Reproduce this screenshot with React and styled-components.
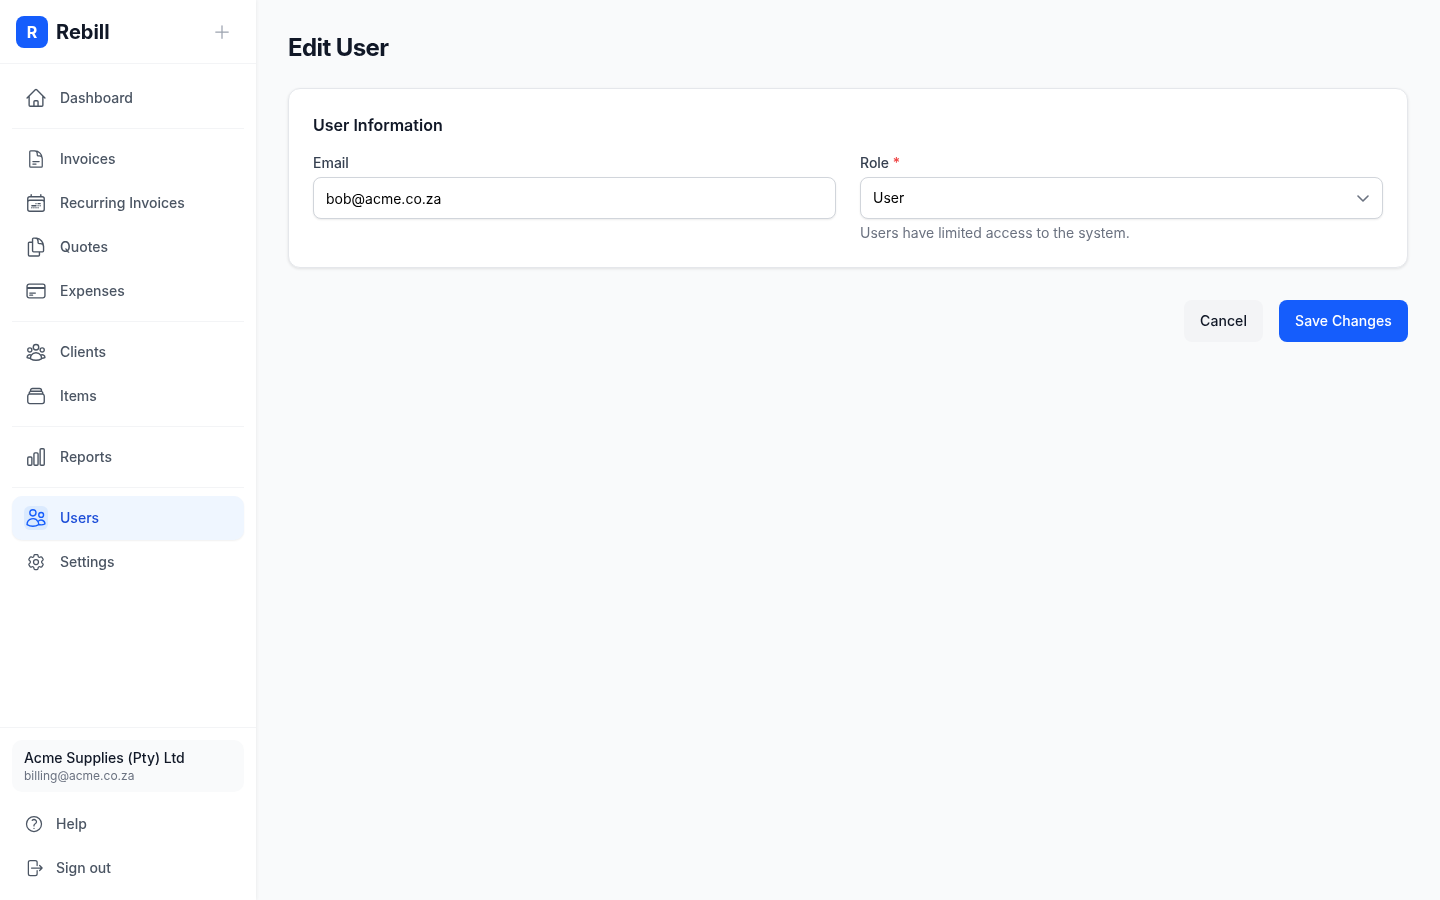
import React from 'react';
import styled, { createGlobalStyle } from 'styled-components';
import {
  HiOutlineHome, HiOutlineDocumentText, HiOutlineCalendarDateRange, HiOutlineDocumentDuplicate,
  HiOutlineCreditCard, HiOutlineUserGroup, HiOutlineRectangleStack, HiOutlineChartBar,
  HiOutlineCog6Tooth, HiOutlineQuestionMarkCircle, HiOutlineArrowRightOnRectangle,
  HiOutlineUsers, HiOutlinePlus,
} from 'react-icons/hi2';

const Global = createGlobalStyle`
  html, body { margin: 0; padding: 0; height: 100%; }
  body { font-family: Inter, "Liberation Sans", sans-serif; background: #f9fafb; color: #111827; -webkit-font-smoothing: antialiased; }
  * { box-sizing: border-box; }
`;
const Shell = styled.div`display: flex; height: 900px; overflow: hidden; will-change: opacity;`;
const Sidebar = styled.aside`
  width: 256px; flex: none; background: #fff; display: flex; flex-direction: column;
  box-shadow: 1px 0 3px rgba(0,0,0,.05);
`;
const Brand = styled.div`
  height: 64px; flex: none; display: flex; align-items: center; padding: 0 16px;
  border-bottom: 1px solid #f3f4f6;
`;
const Logo = styled.div`
  width: 32px; height: 32px; border-radius: 8px; background: #155dfc; color: #fff;
  display: flex; align-items: center; justify-content: center; font-size: 16px; font-weight: 700; line-height: 20px;
`;
const BrandName = styled.span`margin-left: 8px; font-size: 20px; line-height: 28px; font-weight: 700; color: #111827; flex: 1;`;
const AddBtn = styled.span`display: flex; color: #9ca3af; margin-right: 8px;`;
const Nav = styled.nav`flex: 1; padding: 12px 12px 0; display: flex; flex-direction: column;`;
const Divider = styled.div`height: 1px; flex: none; background: #f3f4f6; margin: 8px 0;`;
const Item = styled.a`
  height: 44px; flex: none; display: flex; align-items: center; gap: 12px; padding: 0 12px;
  border-radius: 10px; font-size: 14px; line-height: 20px; font-weight: 500;
  color: ${p => (p.$active ? '#1d4ed8' : '#4b5563')};
  background: ${p => (p.$active ? '#eff6ff' : 'transparent')};
  box-shadow: ${p => (p.$active ? '0 1px 2px rgba(0,0,0,.06)' : 'none')};
`;
const IconBox = styled.span`
  width: 24px; height: 24px; flex: none; display: flex; align-items: center; justify-content: center;
  border-radius: 6px;
  color: ${p => (p.$active ? '#155dfc' : '#4b5563')};
  background: ${p => (p.$active ? '#dbeafe' : 'transparent')};
`;
const Foot = styled.div`border-top: 1px solid #f3f4f6; padding: 12px 12px 10px; flex: none;`;
const Org = styled.div`
  height: 52px; background: #f9fafb; border-radius: 10px; padding: 9px 12px; margin-bottom: 10px;
`;
const OrgName = styled.div`font-size: 14px; line-height: 18px; font-weight: 500; color: #111827;`;
const OrgMail = styled.div`font-size: 12px; line-height: 18px; color: #6b7280;`;
const FootItem = styled(Item)`padding: 0 10px; gap: 10px;`;
const Main = styled.main`flex: 1; padding: 32px; min-width: 0;`;
const Title = styled.h1`margin: 0 0 24px; font-size: 24px; line-height: 32px; font-weight: 700; color: #111827; letter-spacing: -0.6px;`;
const Card = styled.section`
  height: 180px; background: #fff; border: 1px solid #e5e7eb; border-radius: 12px; padding: 24px;
  box-shadow: 0 1px 3px rgba(0,0,0,.1);
`;
const CardTitle = styled.h2`margin: 0 0 16px; font-size: 16px; line-height: 24px; font-weight: 600; color: #111827;`;
const Grid = styled.div`display: grid; grid-template-columns: 1fr 1fr; gap: 24px;`;
const Field = styled.div`display: flex; flex-direction: column;`;
const Label = styled.label`font-size: 14px; line-height: 20px; font-weight: 500; color: #374151; margin-bottom: 4px;`;
const Req = styled.span`color: #ef4444;`;
const inputCss = `
  width: 100%; height: 42px; border: 1px solid #d1d5db; border-radius: 8px; background: #fff;
  padding: 0 12px; font: 400 14px/20px Inter, sans-serif; color: #000; outline: none;
  box-shadow: 0 1px 2px rgba(0,0,0,.08);
`;
const Input = styled.input`${inputCss} padding-top: 1px;`;
const SelectWrap = styled.div`position: relative;`;
const Select = styled.select`${inputCss} appearance: none;`;
const Chevron = styled.svg`position: absolute; right: 14px; top: 18px; pointer-events: none;`;
const Hint = styled.p`margin: 4px 0 0; font-size: 14px; line-height: 20px; color: #6b7280;`;
const Actions = styled.div`display: flex; justify-content: flex-end; gap: 16px; margin-top: 32px;`;
const Btn = styled.button`
  height: 42px; padding: 0 16px; border: 0; border-radius: 8px; font: 500 14px/20px Inter, sans-serif; letter-spacing: .08px;
  color: ${p => (p.$primary ? '#fff' : '#111827')};
  background: ${p => (p.$primary ? '#155dfc' : '#f3f4f6')};
`;

const groups = [
  [['Dashboard', HiOutlineHome, 22]],
  [['Invoices', HiOutlineDocumentText, 20], ['Recurring Invoices', HiOutlineCalendarDateRange, 22], ['Quotes', HiOutlineDocumentDuplicate, 22], ['Expenses', HiOutlineCreditCard, 22]],
  [['Clients', HiOutlineUserGroup, 22], ['Items', HiOutlineRectangleStack, 22]],
  [['Reports', HiOutlineChartBar, 22]],
  [['Users', HiOutlineUsers, 22, true], ['Settings', HiOutlineCog6Tooth, 20]],
];

export default function App() {
  return (
    <Shell>
      <Global />
      <Sidebar>
        <Brand>
          <Logo>R</Logo>
          <BrandName>Rebill</BrandName>
          <AddBtn><HiOutlinePlus size={20} /></AddBtn>
        </Brand>
        <Nav>
          {groups.map((g, i) => (
            <React.Fragment key={i}>
              {i > 0 && <Divider />}
              {g.map(([label, Icon, size, active]) => (
                <Item key={label} $active={active}>
                  <IconBox $active={active}><Icon size={size} /></IconBox>
                  {label}
                </Item>
              ))}
            </React.Fragment>
          ))}
        </Nav>
        <Foot>
          <Org>
            <OrgName>Acme Supplies (Pty) Ltd</OrgName>
            <OrgMail>billing@acme.co.za</OrgMail>
          </Org>
          <FootItem><IconBox><HiOutlineQuestionMarkCircle size={20} /></IconBox>Help</FootItem>
          <FootItem><IconBox><HiOutlineArrowRightOnRectangle size={20} /></IconBox>Sign out</FootItem>
        </Foot>
      </Sidebar>
      <Main>
        <Title>Edit User</Title>
        <Card>
          <CardTitle>User Information</CardTitle>
          <Grid>
            <Field>
              <Label>Email</Label>
              <Input readOnly value="bob@acme.co.za" />
            </Field>
            <Field>
              <Label>Role <Req>*</Req></Label>
              <SelectWrap>
                <Select defaultValue="User"><option>User</option><option>Admin</option></Select>
                <Chevron width="12" height="7" viewBox="0 0 12 7" fill="none" stroke="#6b7280" strokeWidth="1.6" strokeLinecap="round" strokeLinejoin="round"><path d="M1 1l5 5 5-5" /></Chevron>
              </SelectWrap>
              <Hint>Users have limited access to the system.</Hint>
            </Field>
          </Grid>
        </Card>
        <Actions>
          <Btn>Cancel</Btn>
          <Btn $primary>Save Changes</Btn>
        </Actions>
      </Main>
    </Shell>
  );
}
